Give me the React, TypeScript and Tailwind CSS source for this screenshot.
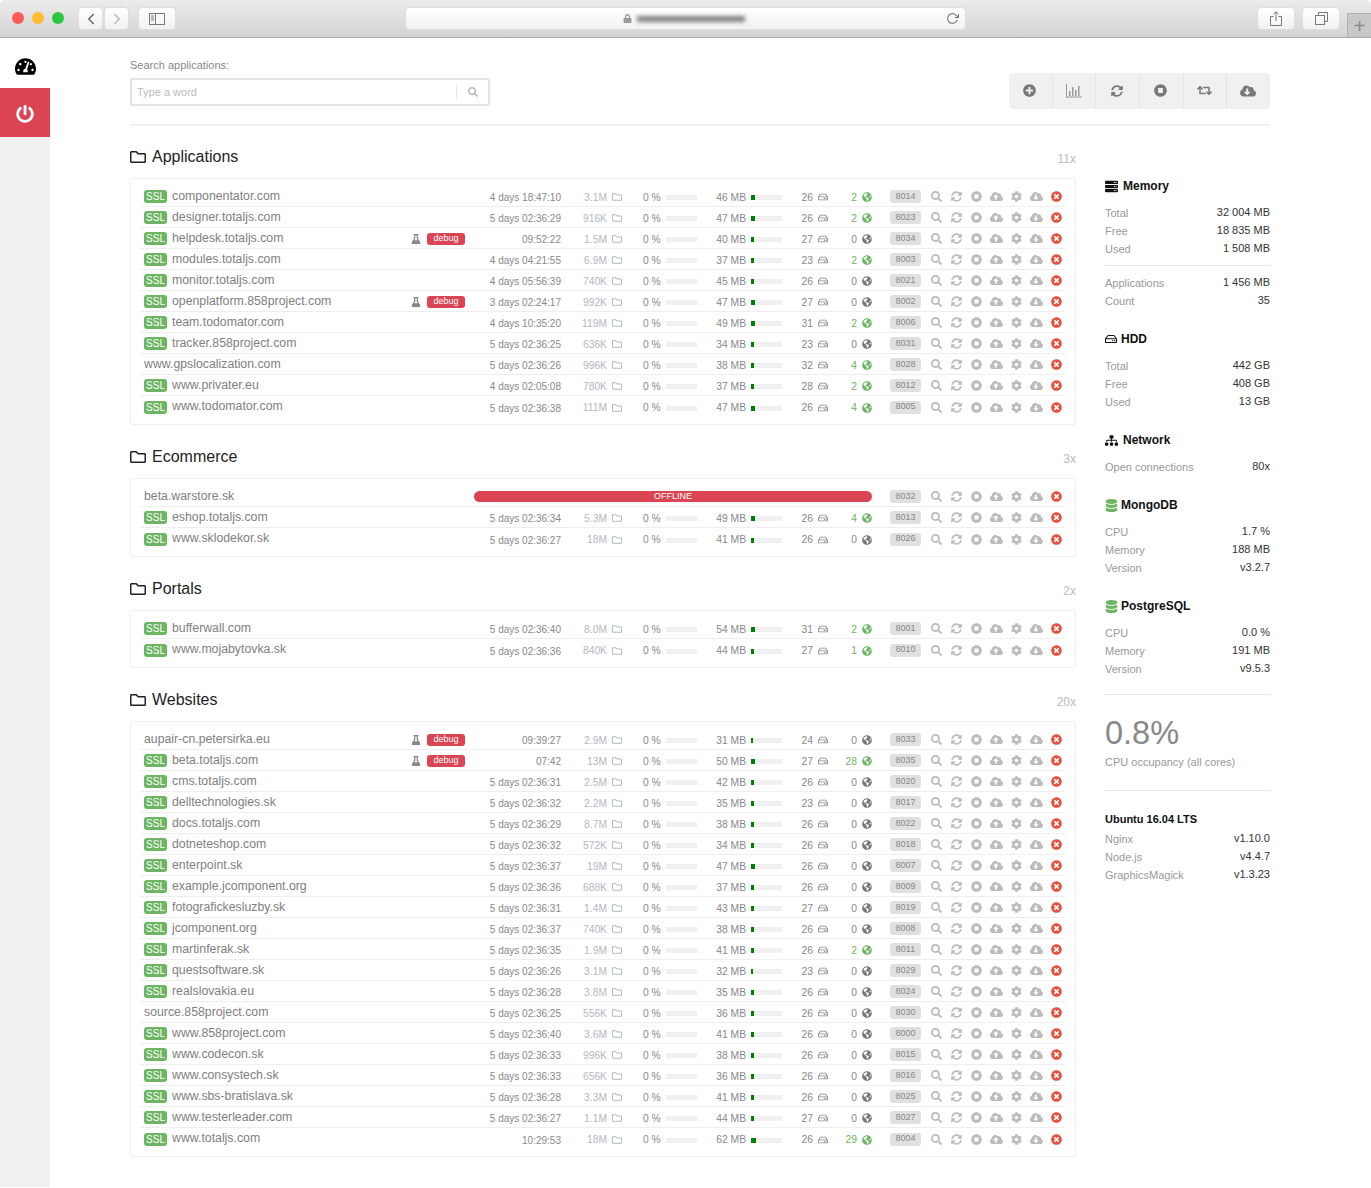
import React from "react";
import {
  FaTachometerAlt,
  FaPowerOff,
  FaSearch,
  FaPlusCircle,
  FaSyncAlt,
  FaStopCircle,
  FaRetweet,
  FaCloudDownloadAlt,
  FaCloudUploadAlt,
  FaCog,
  FaTimesCircle,
  FaGlobeAmericas,
  FaRegHdd,
  FaRegFolder,
  FaFlask,
  FaSitemap,
  FaDatabase,
  FaServer,
  FaLock,
} from "react-icons/fa";
import { FiChevronLeft, FiChevronRight, FiRotateCw } from "react-icons/fi";

type AppRow = [boolean, string, boolean, string, string, number, number, number, string];

const applications: AppRow[] = [
  [true, "componentator.com", false, "4 days 18:47:10", "3.1M", 46, 26, 2, "8014"],
  [true, "designer.totaljs.com", false, "5 days 02:36:29", "916K", 47, 26, 2, "8023"],
  [true, "helpdesk.totaljs.com", true, "09:52:22", "1.5M", 40, 27, 0, "8034"],
  [true, "modules.totaljs.com", false, "4 days 04:21:55", "6.9M", 37, 23, 2, "8003"],
  [true, "monitor.totaljs.com", false, "4 days 05:56:39", "740K", 45, 26, 0, "8021"],
  [true, "openplatform.858project.com", true, "3 days 02:24:17", "992K", 47, 27, 0, "8002"],
  [true, "team.todomator.com", false, "4 days 10:35:20", "119M", 49, 31, 2, "8006"],
  [true, "tracker.858project.com", false, "5 days 02:36:25", "636K", 34, 23, 0, "8031"],
  [false, "www.gpslocalization.com", false, "5 days 02:36:26", "996K", 38, 32, 4, "8028"],
  [true, "www.privater.eu", false, "4 days 02:05:08", "780K", 37, 28, 2, "8012"],
  [true, "www.todomator.com", false, "5 days 02:36:38", "111M", 47, 26, 4, "8005"],
];

const ecommerce: AppRow[] = [
  [false, "beta.warstore.sk", false, "", "", 0, 0, 0, "8032"],
  [true, "eshop.totaljs.com", false, "5 days 02:36:34", "5.3M", 49, 26, 4, "8013"],
  [true, "www.sklodekor.sk", false, "5 days 02:36:27", "18M", 41, 26, 0, "8026"],
];

const portals: AppRow[] = [
  [true, "bufferwall.com", false, "5 days 02:36:40", "8.0M", 54, 31, 2, "8001"],
  [true, "www.mojabytovka.sk", false, "5 days 02:36:36", "840K", 44, 27, 1, "8010"],
];

const websites: AppRow[] = [
  [false, "aupair-cn.petersirka.eu", true, "09:39:27", "2.9M", 31, 24, 0, "8033"],
  [true, "beta.totaljs.com", true, "07:42", "13M", 50, 27, 28, "8035"],
  [true, "cms.totaljs.com", false, "5 days 02:36:31", "2.5M", 42, 26, 0, "8020"],
  [true, "delltechnologies.sk", false, "5 days 02:36:32", "2.2M", 35, 23, 0, "8017"],
  [true, "docs.totaljs.com", false, "5 days 02:36:29", "8.7M", 38, 26, 0, "8022"],
  [true, "dotneteshop.com", false, "5 days 02:36:32", "572K", 34, 26, 0, "8018"],
  [true, "enterpoint.sk", false, "5 days 02:36:37", "19M", 47, 26, 0, "8007"],
  [true, "example.jcomponent.org", false, "5 days 02:36:36", "688K", 37, 26, 0, "8009"],
  [true, "fotografickesluzby.sk", false, "5 days 02:36:31", "1.4M", 43, 27, 0, "8019"],
  [true, "jcomponent.org", false, "5 days 02:36:37", "740K", 38, 26, 0, "8008"],
  [true, "martinferak.sk", false, "5 days 02:36:35", "1.9M", 41, 26, 2, "8011"],
  [true, "questsoftware.sk", false, "5 days 02:36:26", "3.1M", 32, 23, 0, "8029"],
  [true, "realslovakia.eu", false, "5 days 02:36:28", "3.8M", 35, 26, 0, "8024"],
  [false, "source.858project.com", false, "5 days 02:36:25", "556K", 36, 26, 0, "8030"],
  [true, "www.858project.com", false, "5 days 02:36:40", "3.6M", 41, 26, 0, "8000"],
  [true, "www.codecon.sk", false, "5 days 02:36:33", "996K", 38, 26, 0, "8015"],
  [true, "www.consystech.sk", false, "5 days 02:36:33", "656K", 36, 26, 0, "8016"],
  [true, "www.sbs-bratislava.sk", false, "5 days 02:36:28", "3.3M", 41, 26, 0, "8025"],
  [true, "www.testerleader.com", false, "5 days 02:36:27", "1.1M", 44, 27, 0, "8027"],
  [true, "www.totaljs.com", false, "10:29:53", "18M", 62, 26, 29, "8004"],
];

const ChartIcon = () => (
  <svg width="16" height="14" viewBox="0 0 16 14" fill="#999">
    <rect x="0" y="0" width="1" height="14" />
    <rect x="0" y="12.5" width="16" height="1" />
    <rect x="3" y="7" width="1.5" height="5" />
    <rect x="6" y="3" width="1.5" height="9" />
    <rect x="9" y="6" width="1.5" height="6" />
    <rect x="12" y="2" width="1.5" height="10" />
  </svg>
);

const Row = ({ row }: { row: AppRow }) => {
  const [ssl, name, debug, uptime, size, mem, hdd, conn, port] = row;
  const online = conn > 0;
  return (
    <div className="flex h-[21px] items-center border-b border-[#eeeeee] pl-1 last:border-b-0">
      {ssl && (
        <span className="mr-[5px] mt-[1px] flex h-[13px] w-[23px] shrink-0 items-center justify-center rounded-[3px] bg-[#6cb562] text-[10px] text-white">
          SSL
        </span>
      )}
      <span className="min-w-0 flex-1 truncate text-[12.3px] text-[#808080]">{name}</span>
      {uptime === "" ? (
        <div className="mt-[1px] flex h-[11px] w-[398px] items-center justify-center rounded-full bg-[#da4453] text-[9px] text-white">
          OFFLINE
        </div>
      ) : (
        <>
          {debug && (
            <div className="mt-[1px] flex items-center gap-[6px]">
              <FaFlask className="h-[10px] w-[10px] text-[#888888]" />
              <span className="flex h-[12px] w-[38px] items-center justify-center rounded-[3px] bg-[#da4453] text-[9px] text-white">
                debug
              </span>
            </div>
          )}
          <span className="w-[96px] pt-[3px] text-right text-[10px] text-[#888888]">{uptime}</span>
          <span className="w-[46px] pt-[3px] text-right text-[10.3px] text-[#b4b8c0]">{size}</span>
          <FaRegFolder className="ml-[5px] mt-[2px] h-[10px] w-[10px] text-[#b4b8c0]" />
          <span className="ml-[21px] w-[23px] pt-[3px] text-[10.3px] text-[#888888]">0 %</span>
          <div className="mt-[3px] h-[5px] w-[31px] bg-[#f0f0f0]" />
          <span className="w-[49px] pt-[3px] text-right text-[10.3px] text-[#888888]">{mem} MB</span>
          <div className="ml-[5px] mt-[3px] h-[5px] w-[31px] bg-[#f0f0f0]">
            <div className="h-full bg-[#008000]" style={{ width: mem / 13 }} />
          </div>
          <span className="w-[31px] pt-[3px] text-right text-[10.3px] text-[#888888]">{hdd}</span>
          <FaRegHdd className="ml-[5px] mt-[2px] h-[10px] w-[10px] text-[#888888]" />
          <span className={`w-[29px] pt-[3px] text-right text-[10.3px] ${online ? "text-[#6cb562]" : "text-[#888888]"}`}>
            {conn}
          </span>
          <FaGlobeAmericas className={`ml-[5px] mt-[2px] h-[10px] w-[10px] ${online ? "text-[#6cb562]" : "text-[#777777]"}`} />
        </>
      )}
      <span className="ml-[18px] mt-[1px] flex h-[13px] w-[31px] items-center justify-center rounded-[3px] bg-[#e0e0e0] text-[9px] text-[#888888]">
        {port}
      </span>
      <div className="ml-[5px] mt-[1px] flex items-center text-[#bbbbbb]">
        <span className="flex w-[20px] justify-center text-[11px]"><FaSearch /></span>
        <span className="flex w-[20px] justify-center text-[11px]"><FaSyncAlt /></span>
        <span className="flex w-[20px] justify-center text-[11px]"><FaStopCircle /></span>
        <span className="flex w-[20px] justify-center text-[13px]"><FaCloudUploadAlt /></span>
        <span className="flex w-[20px] justify-center text-[11px]"><FaCog /></span>
        <span className="flex w-[20px] justify-center text-[13px]"><FaCloudDownloadAlt /></span>
        <span className="flex w-[20px] justify-center text-[11px] text-[#e9503e]"><FaTimesCircle /></span>
      </div>
    </div>
  );
};

const Section = ({ title, count, rows }: { title: string; count: string; rows: AppRow[] }) => (
  <section className="mb-[19px]">
    <div className="mb-[10px] flex h-[24px] items-center pt-[2px]">
      <FaRegFolder className="mr-[6px] text-[16px] text-[#222222]" />
      <h2 className="flex-1 text-[16px] text-[#222222]">{title}</h2>
      <span className="pt-[3px] text-[12px] text-[#bbbbbb]">{count}</span>
    </div>
    <div className="rounded-[3px] border border-[#eeeeee] px-[9px] py-[7px]">
      {rows.map((row) => (
        <Row key={row[1]} row={row} />
      ))}
    </div>
  </section>
);

const Stat = ({ label, value }: { label: string; value: string }) => (
  <div className="flex h-[18px] items-center justify-between text-[11px]">
    <span className="text-[#999999]">{label}</span>
    <span className="pb-[2px] text-[#333333]">{value}</span>
  </div>
);

const Heading = ({ icon, title, className }: { icon?: React.ReactNode; title: string; className: string }) => (
  <div className={`mb-[10px] flex h-[16px] items-center text-[12px] font-bold text-[#111111] ${className}`}>
    {icon}
    <span>{title}</span>
  </div>
);

const ToolbarCell = ({ children, last }: { children: React.ReactNode; last?: boolean }) => (
  <div className={`flex h-full flex-1 items-center justify-center pb-[1px] pr-[1px] text-[#777777] ${last ? "" : "border-r border-[#e4e4e4]"}`}>
    {children}
  </div>
);

const WindowButton = ({ className, children }: { className: string; children?: React.ReactNode }) => (
  <div className={`flex h-[23px] items-center justify-center rounded-[4px] border border-[#dddddd] bg-gradient-to-b from-[#ffffff] to-[#f2f2f2] text-[#666666] ${className}`}>
    {children}
  </div>
);

const BrowserBar = () => (
  <div className="flex h-[38px] items-start rounded-t-[5px] border-b border-[#a9a9a9] bg-gradient-to-b from-[#ececec] to-[#d3d3d3] pt-[7px]">
    <div className="ml-[12px] mt-[5px] flex gap-[8px]">
      <span className="h-[12px] w-[12px] rounded-full bg-[#fc5b57]" />
      <span className="h-[12px] w-[12px] rounded-full bg-[#fdbc2e]" />
      <span className="h-[12px] w-[12px] rounded-full bg-[#27c83f]" />
    </div>
    <WindowButton className="ml-[14px] w-[25px]">
      <FiChevronLeft className="text-[18px]" />
    </WindowButton>
    <WindowButton className="ml-[1px] w-[25px] text-[#bbbbbb]">
      <FiChevronRight className="text-[18px]" />
    </WindowButton>
    <WindowButton className="ml-[9px] w-[38px]">
      <svg width="16" height="12" viewBox="0 0 16 12" fill="none" stroke="#777777">
        <rect x="0.5" y="0.5" width="15" height="11" />
        <path d="M6.5 0.5V11.5M2 3H5M2 5H5M2 7H5" />
      </svg>
    </WindowButton>
    <WindowButton className="ml-[229px] w-[561px] pl-[217px] pr-[6px]">
      <FaLock className="text-[9px] text-[#999999]" />
      <div className="ml-[5px] h-[6px] w-[108px] bg-[#808080] blur-[2px]" />
      <div className="flex-1" />
      <FiRotateCw className="text-[13px] text-[#777777]" />
    </WindowButton>
    <WindowButton className="ml-[291px] w-[38px]">
      <svg width="12" height="15" viewBox="0 0 12 15" fill="none" stroke="#777777">
        <path d="M3.5 5.5H0.5V14.5H11.5V5.5H8.5M6 10V1M3.5 3L6 0.8L8.5 3" />
      </svg>
    </WindowButton>
    <WindowButton className="ml-[7px] w-[38px]">
      <svg width="13" height="13" viewBox="0 0 13 13" fill="none" stroke="#777777">
        <path d="M3.5 3.5V0.5H12.5V9.5H9.5" />
        <rect x="0.5" y="3.5" width="9" height="9" />
      </svg>
    </WindowButton>
    <div className="ml-[7px] mt-[6px] flex h-[24px] flex-1 items-center justify-center border-l border-t border-[#b0b0b0] bg-[#c8c8c8] text-[20px] leading-none text-[#8a8a8a]">
      +
    </div>
  </div>
);

const Sidebar = () => (
  <aside className="flex w-[50px] shrink-0 flex-col bg-[#f0f0f0]">
    <div className="flex h-[50px] items-center justify-center bg-white pt-[6px]">
      <FaTachometerAlt className="text-[21px] text-black" />
    </div>
    <div className="flex h-[49px] items-center justify-center bg-[#da4453] pt-[3px]">
      <FaPowerOff className="text-[18px] text-white" />
    </div>
  </aside>
);

const Header = () => (
  <header className="flex items-start justify-between border-b-2 border-[#f0f0f0] pb-[15px] pt-[20px]">
    <div>
      <div className="mb-[6px] h-[14px] text-[11px] leading-[14px] text-[#888888]">Search applications:</div>
      <div className="flex h-[28px] w-[360px] items-center rounded-[2px] border-2 border-[#e4e4e4] pl-[5px]">
        <span className="flex-1 text-[11px] text-[#bbbbbb]">Type a word</span>
        <div className="flex h-[14px] w-[32px] items-center justify-center border-l border-[#e4e4e4]">
          <FaSearch className="text-[10px] text-[#bbbbbb]" />
        </div>
      </div>
    </div>
    <div className="mt-[15px] flex h-[36px] w-[261px] rounded-[4px] bg-[#f0f0f0]">
      <ToolbarCell><FaPlusCircle className="text-[13px]" /></ToolbarCell>
      <ToolbarCell><ChartIcon /></ToolbarCell>
      <ToolbarCell><FaSyncAlt className="text-[12px]" /></ToolbarCell>
      <ToolbarCell><FaStopCircle className="text-[13px]" /></ToolbarCell>
      <ToolbarCell><FaRetweet className="text-[15px]" /></ToolbarCell>
      <ToolbarCell last><FaCloudDownloadAlt className="text-[16px]" /></ToolbarCell>
    </div>
  </header>
);

const ServerInfo = () => (
  <aside className="w-[165px] shrink-0 pt-[34px]">
    <Heading icon={<FaServer className="text-[13px]" />} title="Memory" className="gap-[5px]" />
    <Stat label="Total" value="32 004 MB" />
    <Stat label="Free" value="18 835 MB" />
    <Stat label="Used" value="1 508 MB" />
    <hr className="mb-[8px] mt-[7px] border-[#e6e6e6]" />
    <Stat label="Applications" value="1 456 MB" />
    <Stat label="Count" value="35" />

    <Heading icon={<FaRegHdd className="text-[12px]" />} title="HDD" className="mt-[21px] gap-[4px]" />
    <Stat label="Total" value="442 GB" />
    <Stat label="Free" value="408 GB" />
    <Stat label="Used" value="13 GB" />

    <Heading icon={<FaSitemap className="text-[13px]" />} title="Network" className="mt-[21px] gap-[5px]" />
    <Stat label="Open connections" value="80x" />

    <Heading icon={<FaDatabase className="text-[13px] text-[#6cb562]" />} title="MongoDB" className="mt-[21px] gap-[3px]" />
    <Stat label="CPU" value="1.7 %" />
    <Stat label="Memory" value="188 MB" />
    <Stat label="Version" value="v3.2.7" />

    <Heading icon={<FaDatabase className="text-[13px] text-[#6cb562]" />} title="PostgreSQL" className="mt-[21px] gap-[3px]" />
    <Stat label="CPU" value="0.0 %" />
    <Stat label="Memory" value="191 MB" />
    <Stat label="Version" value="v9.5.3" />

    <hr className="mt-[16px] border-[#e6e6e6]" />
    <div className="mt-[18px] h-[40px] text-[32.5px] leading-[40px] text-[#888888]">0.8%</div>
    <div className="h-[18px] text-[11px] leading-[18px] text-[#999999]">CPU occupancy (all cores)</div>
    <hr className="mt-[19px] border-[#e6e6e6]" />

    <div className="mb-[3px] mt-[20px] flex h-[16px] items-center text-[11px] font-bold text-[#111111]">Ubuntu 16.04 LTS</div>
    <Stat label="Nginx" value="v1.10.0" />
    <Stat label="Node.js" value="v4.4.7" />
    <Stat label="GraphicsMagick" value="v1.3.23" />
  </aside>
);

export default function App() {
  return (
    <div className="min-h-[1188px] bg-white font-['Liberation_Sans',Arial,sans-serif]">
      <BrowserBar />
      <div className="flex">
        <Sidebar />
        <main className="ml-[80px] w-[1140px] pb-[11px]">
          <Header />
          <div className="mt-[18px] flex gap-[29px]">
            <div className="w-[946px] shrink-0">
              <Section title="Applications" count="11x" rows={applications} />
              <Section title="Ecommerce" count="3x" rows={ecommerce} />
              <Section title="Portals" count="2x" rows={portals} />
              <Section title="Websites" count="20x" rows={websites} />
            </div>
            <ServerInfo />
          </div>
        </main>
      </div>
    </div>
  );
}
